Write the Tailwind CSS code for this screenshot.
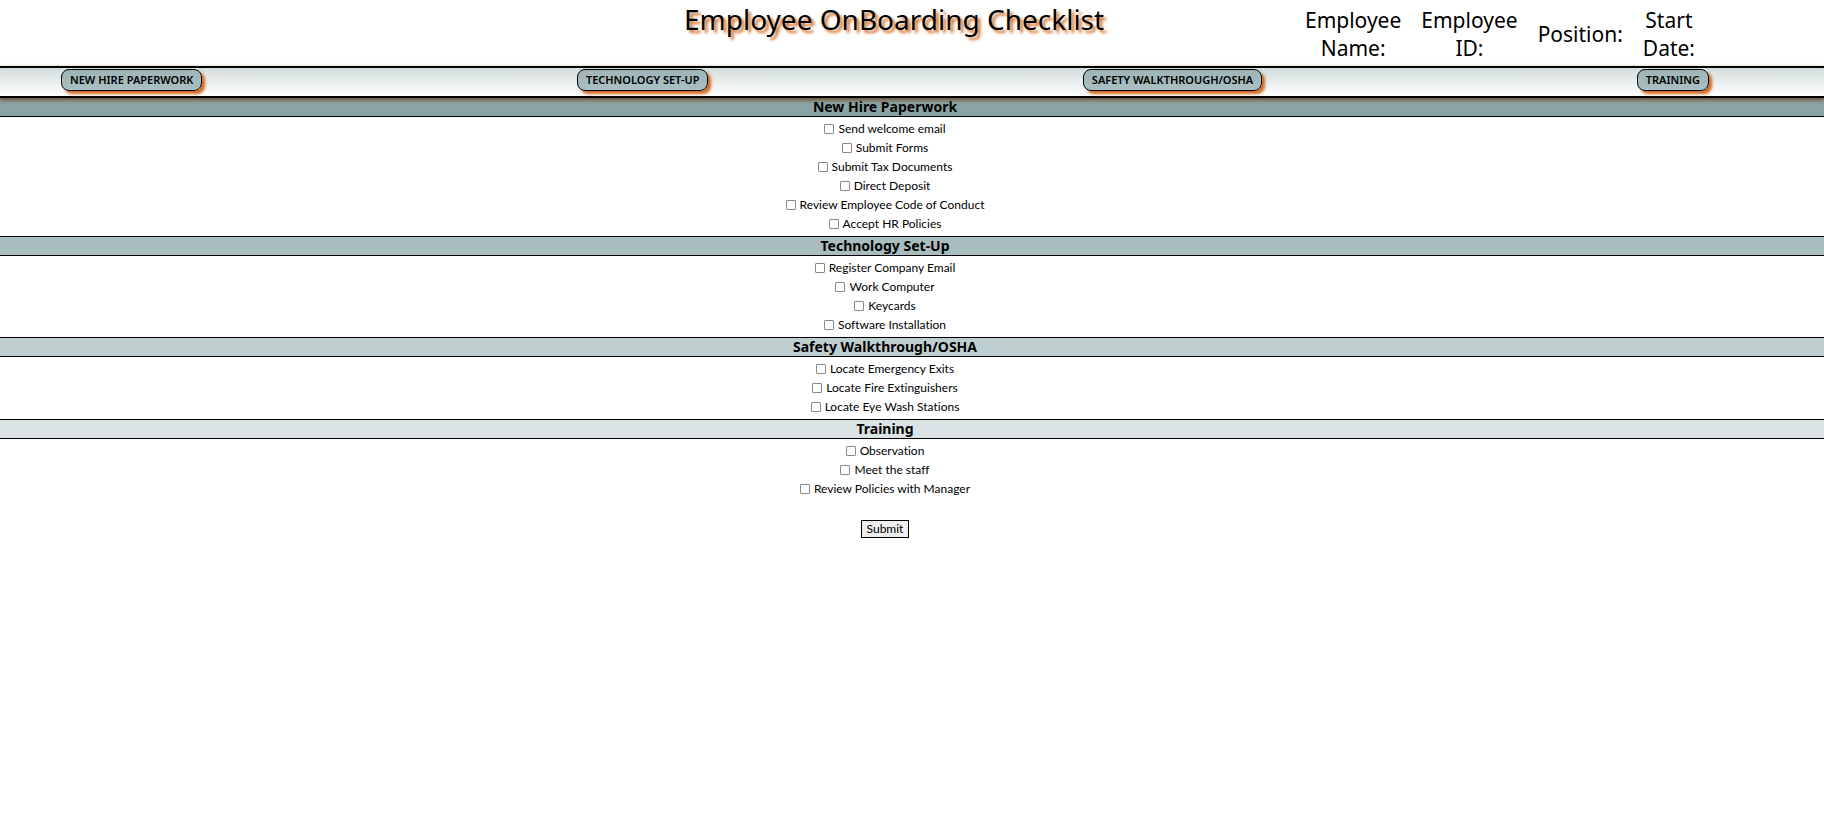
<!DOCTYPE html>
<html lang="en">
<head>
<meta charset="utf-8">
<title>Employee OnBoarding Checklist</title>
<script src="https://cdn.jsdelivr.net/npm/@tailwindcss/browser@4"></script>
</head>
<body class="bg-white text-black font-['Trebuchet_MS','Lato',sans-serif] [font-variant-ligatures:none]">
<header class="flex h-[66px] justify-between pl-[684px] pr-[129px] font-['Trebuchet_MS','Noto_Sans',sans-serif]">
  <h1 class="whitespace-nowrap text-[28px] leading-[38px] [text-shadow:3px_3px_3px_#d2691e]">Employee OnBoarding Checklist</h1>
  <div class="flex items-center gap-5 pt-[2px] text-center text-[21px] leading-[28px]">
    <p>Employee<br>Name:</p>
    <p>Employee<br>ID:</p>
    <p>Position:</p>
    <p>Start<br>Date:</p>
  </div>
</header>
<nav class="relative flex h-[32px] items-start justify-between border-y-2 border-black bg-linear-to-b from-[#d3dddd] to-white pt-px pr-[115px] pl-[61px] font-['Trebuchet_MS','Noto_Sans',sans-serif] text-[11px] font-semibold shadow-[0_2px_4px_#6e4a28]">
  <a href="#paperwork" class="flex h-[22px] items-center rounded-[8px] border border-black bg-linear-to-b from-[#9fb4b6] to-[#aabfc1] px-2 shadow-[3px_3px_3px_#d2691e]">NEW HIRE PAPERWORK</a>
  <a href="#technology" class="flex h-[22px] items-center rounded-[8px] border border-black bg-linear-to-b from-[#9fb4b6] to-[#aabfc1] px-2 shadow-[3px_3px_3px_#d2691e]">TECHNOLOGY SET-UP</a>
  <a href="#safety" class="flex h-[22px] items-center rounded-[8px] border border-black bg-linear-to-b from-[#9fb4b6] to-[#aabfc1] px-2 shadow-[3px_3px_3px_#d2691e]">SAFETY WALKTHROUGH/OSHA</a>
  <a href="#training" class="flex h-[22px] items-center rounded-[8px] border border-black bg-linear-to-b from-[#9fb4b6] to-[#aabfc1] px-2 shadow-[3px_3px_3px_#d2691e]">TRAINING</a>
</nav>
<form class="text-center text-[12px] leading-[19px]">
  <section id="paperwork">
    <h2 class="border-b border-black bg-[#8aa4a5] pr-[54px] font-['Trebuchet_MS','Noto_Sans',sans-serif] text-[14px] leading-[18px] font-bold">New Hire Paperwork</h2>
    <ul class="pt-[2px] pr-[54px] pb-[3px]">
      <li class="flex justify-center"><label class="flex items-center gap-1"><input type="checkbox" class="size-[10px] appearance-none rounded-[1px] border border-[#8a8a8a]">Send welcome email</label></li>
      <li class="flex justify-center"><label class="flex items-center gap-1"><input type="checkbox" class="size-[10px] appearance-none rounded-[1px] border border-[#8a8a8a]">Submit Forms</label></li>
      <li class="flex justify-center"><label class="flex items-center gap-1"><input type="checkbox" class="size-[10px] appearance-none rounded-[1px] border border-[#8a8a8a]">Submit Tax Documents</label></li>
      <li class="flex justify-center"><label class="flex items-center gap-1"><input type="checkbox" class="size-[10px] appearance-none rounded-[1px] border border-[#8a8a8a]">Direct Deposit</label></li>
      <li class="flex justify-center"><label class="flex items-center gap-1"><input type="checkbox" class="size-[10px] appearance-none rounded-[1px] border border-[#8a8a8a]">Review Employee Code of Conduct</label></li>
      <li class="flex justify-center"><label class="flex items-center gap-1"><input type="checkbox" class="size-[10px] appearance-none rounded-[1px] border border-[#8a8a8a]">Accept HR Policies</label></li>
    </ul>
  </section>
  <section id="technology">
    <h2 class="border-y border-black bg-[#a9bdbf] pr-[54px] font-['Trebuchet_MS','Noto_Sans',sans-serif] text-[14px] leading-[18px] font-bold">Technology Set-Up</h2>
    <ul class="pt-[2px] pr-[54px] pb-[3px]">
      <li class="flex justify-center"><label class="flex items-center gap-1"><input type="checkbox" class="size-[10px] appearance-none rounded-[1px] border border-[#8a8a8a]">Register Company Email</label></li>
      <li class="flex justify-center"><label class="flex items-center gap-1"><input type="checkbox" class="size-[10px] appearance-none rounded-[1px] border border-[#8a8a8a]">Work Computer</label></li>
      <li class="flex justify-center"><label class="flex items-center gap-1"><input type="checkbox" class="size-[10px] appearance-none rounded-[1px] border border-[#8a8a8a]">Keycards</label></li>
      <li class="flex justify-center"><label class="flex items-center gap-1"><input type="checkbox" class="size-[10px] appearance-none rounded-[1px] border border-[#8a8a8a]">Software Installation</label></li>
    </ul>
  </section>
  <section id="safety">
    <h2 class="border-y border-black bg-[#bfcfcf] pr-[54px] font-['Trebuchet_MS','Noto_Sans',sans-serif] text-[14px] leading-[18px] font-bold">Safety Walkthrough/OSHA</h2>
    <ul class="pt-[2px] pr-[54px] pb-[3px]">
      <li class="flex justify-center"><label class="flex items-center gap-1"><input type="checkbox" class="size-[10px] appearance-none rounded-[1px] border border-[#8a8a8a]">Locate Emergency Exits</label></li>
      <li class="flex justify-center"><label class="flex items-center gap-1"><input type="checkbox" class="size-[10px] appearance-none rounded-[1px] border border-[#8a8a8a]">Locate Fire Extinguishers</label></li>
      <li class="flex justify-center"><label class="flex items-center gap-1"><input type="checkbox" class="size-[10px] appearance-none rounded-[1px] border border-[#8a8a8a]">Locate Eye Wash Stations</label></li>
    </ul>
  </section>
  <section id="training">
    <h2 class="border-y border-black bg-[#dbe3e4] pr-[54px] font-['Trebuchet_MS','Noto_Sans',sans-serif] text-[14px] leading-[18px] font-bold">Training</h2>
    <ul class="pt-[2px] pr-[54px] pb-[3px]">
      <li class="flex justify-center"><label class="flex items-center gap-1"><input type="checkbox" class="size-[10px] appearance-none rounded-[1px] border border-[#8a8a8a]">Observation</label></li>
      <li class="flex justify-center"><label class="flex items-center gap-1"><input type="checkbox" class="size-[10px] appearance-none rounded-[1px] border border-[#8a8a8a]">Meet the staff</label></li>
      <li class="flex justify-center"><label class="flex items-center gap-1"><input type="checkbox" class="size-[10px] appearance-none rounded-[1px] border border-[#8a8a8a]">Review Policies with Manager</label></li>
    </ul>
  </section>
  <div class="flex justify-center pt-[19px] pr-[54px]">
    <button type="submit" class="border border-black bg-[#efefef] px-[5px] leading-[16px]">Submit</button>
  </div>
</form>
</body>
</html>
